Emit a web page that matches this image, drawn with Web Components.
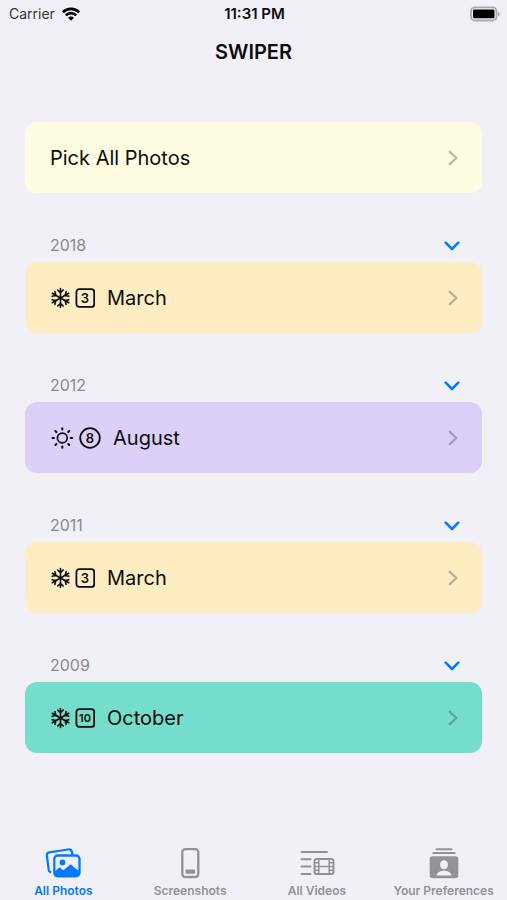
<!DOCTYPE html>
<html lang="en">
<head>
<meta charset="utf-8">
<meta name="viewport" content="width=device-width, initial-scale=1">
<title>Swiper</title>
<style>
  body { margin: 0; background: #f1f0f6; color: #0c0c0e; font-family: Inter, "Liberation Sans", sans-serif; }
</style>
</head>
<body>
<swiper-app></swiper-app>

<script>
const ICONS = {
  wifi: [18, 14, `<g fill="none" stroke="currentColor" stroke-width="2.6"><path d="M.9 5.2a11.6 11.6 0 0 1 16.2 0"/><path d="M3.8 8.3a7.400 7.400 0 0 1 10.400 0"/></g><path d="M9 13.700 6 10.700a4.200 4.200 0 0 1 6 0z" fill="currentColor"/>`],
  battery: [30, 16, `<rect x="1" y="1.300" width="25.500" height="13.200" rx="4" fill="none" stroke="#a9a9ae" stroke-width="1.800"/><rect x="3" y="3.500" width="21.500" height="8.800" rx="1.400" fill="#000"/><path d="M28 5.700v4.600c1-.4 1.700-1.300 1.700-2.300S29 6.100 28 5.700z" fill="#a9a9ae"/>`],
  right: [10, 16, `<path d="M1.800 1.800 8.400 8l-6.600 6.200" fill="none" stroke="currentColor" stroke-width="2.400" stroke-linecap="round" stroke-linejoin="round"/>`],
  down: [16, 10, `<path d="M1.700 1.700 8 8l6.300-6.300" fill="none" stroke="currentColor" stroke-width="2.500" stroke-linecap="round" stroke-linejoin="round"/>`],
  snow: [20, 22, `<g fill="none" stroke="currentColor" stroke-width="1.600" stroke-linecap="round">${[0, 60, 120, 180, 240, 300].map(a => `<path d="M10.500 11V1.500M7.800 3 10.500 5.700l2.700-2.700" transform="rotate(${a} 10.500 11)"/>`).join("")}</g>`],
  sun: [24, 24, `<circle cx="12.300" cy="12" r="4.900" fill="none" stroke="currentColor" stroke-width="1.700"/><g stroke="currentColor" stroke-width="2" stroke-linecap="round">${[0, 45, 90, 135, 180, 225, 270, 315].map(a => `<path d="M12.300 3.600V2.200" transform="rotate(${a} 12.300 12)"/>`).join("")}</g>`],
  square: [20, 20, `<rect x="1.400" y="1.100" width="17.800" height="17.800" rx="2.800" fill="none" stroke="currentColor" stroke-width="1.800"/>`],
  circle: [22, 22, `<circle cx="11" cy="11" r="9.800" fill="none" stroke="currentColor" stroke-width="1.800"/>`],
  photos: [38, 32, `<path d="M7.300 24.200c-1.700 0-2.300-.8-2.600-2.300L2.900 7.500C2.700 5.700 3.500 4.600 5.200 4.300L24.400 1.500c2-.3 3.100.5 3.500 2.500l.6 3" fill="none" stroke="currentColor" stroke-width="2.200"/><rect x="10.300" y="7.500" width="25.200" height="20.800" rx="3.500" fill="#f1f0f6" stroke="currentColor" stroke-width="2.300"/><circle cx="18.500" cy="14.500" r="2.900" fill="currentColor"/><path d="M10.300 23.800l5.200-4.500 4 3 7-6 9 7.200V26c0 1.700-1 2.800-2.500 2.800H12.800c-1.500 0-2.500-1.100-2.500-2.800z" fill="currentColor"/>`],
  phone: [20, 32, `<rect x="2.300" y="1.200" width="16" height="27.800" rx="3" fill="none" stroke="currentColor" stroke-width="2.300"/><rect x="5.600" y="21.500" width="9.400" height="4.300" rx=".7" fill="currentColor"/>`],
  videos: [36, 28, `<g stroke="currentColor" stroke-width="2" stroke-linecap="round"><path d="M2.500 2h25.500M2.500 9.300h9M2.500 16.600h9M2.500 24h9"/></g><rect x="15.500" y="9" width="19" height="15" rx="2" fill="none" stroke="currentColor" stroke-width="2"/><path d="M19.800 9v15M30.200 9v15M19.800 16.500h10.400M15.500 12.800h4.300M15.500 16.500h4.300M15.500 20.200h4.300M30.200 12.800h4.300M30.200 16.500h4.300M30.200 20.200h4.300" stroke="currentColor" stroke-width="1.500"/>`],
  person: [30, 32, `<path d="M7.500 1.300h15M4.200 5h21.600" stroke="currentColor" stroke-width="1.900" stroke-linecap="round"/><rect x=".7" y="8.200" width="28.600" height="22" rx="3.200" fill="currentColor"/><ellipse cx="15" cy="16.700" rx="4" ry="4.500" fill="#f1f0f6"/><path d="M7.500 27.500c.7-3.200 3.600-4.700 7.500-4.700s6.800 1.500 7.500 4.700z" fill="#f1f0f6"/>`]
};

class AppIcon extends HTMLElement {
  connectedCallback() {
    const [w, h, art] = ICONS[this.getAttribute("name")];
    this.attachShadow({ mode: "open" }).innerHTML = `
      <style>:host { display: inline-flex; flex: none; } svg { display: block; }</style>
      <svg width="${w}" height="${h}" viewBox="0 0 ${w} ${h}" aria-hidden="true">${art}</svg>`;
  }
}

class MonthBadge extends HTMLElement {
  connectedCallback() {
    const round = this.hasAttribute("round");
    this.attachShadow({ mode: "open" }).innerHTML = `
      <style>
        :host { display: inline-grid; place-items: center; font-size: 13px; line-height: 20px; font-weight: 600; }
        :host([small]) { font-size: 11px; }
        app-icon, span { grid-area: 1 / 1; }
      </style>
      <app-icon name="${round ? "circle" : "square"}"></app-icon><span><slot></slot></span>`;
  }
}

class StatusBar extends HTMLElement {
  connectedCallback() {
    this.attachShadow({ mode: "open" }).innerHTML = `
      <style>
        :host { display: grid; grid-template-columns: 1fr auto 1fr; align-items: center; height: 28px; padding: 0 7px 0 9px; font-size: 14px; line-height: 20px; }
        .carrier { display: flex; align-items: center; gap: 7px; color: #333336; }
        .carrier app-icon { color: #000; }
        time { font-size: 15px; font-weight: 600; }
        .power { justify-self: end; }
      </style>
      <span class="carrier">Carrier<app-icon name="wifi"></app-icon></span>
      <time>11:31 PM</time>
      <app-icon class="power" name="battery"></app-icon>`;
  }
}

class PhotoCard extends HTMLElement {
  connectedCallback() {
    this.attachShadow({ mode: "open" }).innerHTML = `
      <style>
        :host { display: block; }
        a { display: flex; align-items: center; justify-content: space-between; height: 71px; box-sizing: border-box; padding: 0 24px 0 25px; border-radius: 12px; background: var(--card-color); color: inherit; text-decoration: none; font-size: 20px; line-height: 28px; }
        .label { display: flex; align-items: center; }
        .arrow { color: rgba(60, 60, 67, .34); }
        ::slotted(month-badge) { margin: 0 12px 0 5px; }
      </style>
      <a href="#"><span class="label"><slot></slot></span><app-icon class="arrow" name="right"></app-icon></a>`;
  }
}

class YearSection extends HTMLElement {
  connectedCallback() {
    const year = this.getAttribute("year");
    this.attachShadow({ mode: "open" }).innerHTML = `
      <style>
        :host { display: block; }
        header { display: flex; align-items: center; justify-content: space-between; height: 35px; padding: 0 22px 0 25px; }
        h2 { margin: 0; font-size: 16px; line-height: 20px; font-weight: 400; color: #8a8a8f; }
        button { display: flex; padding: 2px 0 0; border: 0; background: none; color: #007aff; }
      </style>
      <header><h2>${year}</h2><button type="button" aria-label="Collapse ${year}"><app-icon name="down"></app-icon></button></header>
      <slot></slot>`;
  }
}

class TabItem extends HTMLElement {
  connectedCallback() {
    this.attachShadow({ mode: "open" }).innerHTML = `
      <style>
        :host { display: block; color: #929297; }
        :host([current]) { color: #007aff; }
        a { display: grid; grid-template-rows: 34px 16px; justify-items: center; align-items: center; row-gap: 2px; padding-bottom: 1px; color: inherit; text-decoration: none; font-size: 12px; line-height: 16px; font-weight: 600; white-space: nowrap; }
      </style>
      <a href="#"><app-icon name="${this.getAttribute("icon")}"></app-icon><span><slot></slot></span></a>`;
  }
}

class SwiperApp extends HTMLElement {
  connectedCallback() {
    this.attachShadow({ mode: "open" }).innerHTML = `
      <style>
        :host { display: flex; flex-direction: column; min-height: 100vh; }
        h1 { margin: 0; padding: 10px 0; text-align: center; font-size: 20px; line-height: 28px; font-weight: 600; }
        main { flex: 1; display: flex; flex-direction: column; gap: 34px; padding: 46px 25px 24px; }
        nav { display: grid; grid-template-columns: repeat(4, 1fr); padding-top: 8px; }
        .cream { --card-color: #fefde2; }
        .peach { --card-color: #feecc3; }
        .lilac { --card-color: #dcd0f8; }
        .mint { --card-color: #74ddcb; }
      </style>
      <status-bar></status-bar>
      <h1>SWIPER</h1>
      <main>
        <photo-card class="cream">Pick All Photos</photo-card>
        <year-section year="2018"><photo-card class="peach"><app-icon name="snow"></app-icon><month-badge>3</month-badge>March</photo-card></year-section>
        <year-section year="2012"><photo-card class="lilac"><app-icon name="sun"></app-icon><month-badge round>8</month-badge>August</photo-card></year-section>
        <year-section year="2011"><photo-card class="peach"><app-icon name="snow"></app-icon><month-badge>3</month-badge>March</photo-card></year-section>
        <year-section year="2009"><photo-card class="mint"><app-icon name="snow"></app-icon><month-badge small>10</month-badge>October</photo-card></year-section>
      </main>
      <nav aria-label="Sections">
        <tab-item icon="photos" current>All Photos</tab-item>
        <tab-item icon="phone">Screenshots</tab-item>
        <tab-item icon="videos">All Videos</tab-item>
        <tab-item icon="person">Your Preferences</tab-item>
      </nav>`;
  }
}

customElements.define("app-icon", AppIcon);
customElements.define("month-badge", MonthBadge);
customElements.define("status-bar", StatusBar);
customElements.define("photo-card", PhotoCard);
customElements.define("year-section", YearSection);
customElements.define("tab-item", TabItem);
customElements.define("swiper-app", SwiperApp);
</script>
</body>
</html>
